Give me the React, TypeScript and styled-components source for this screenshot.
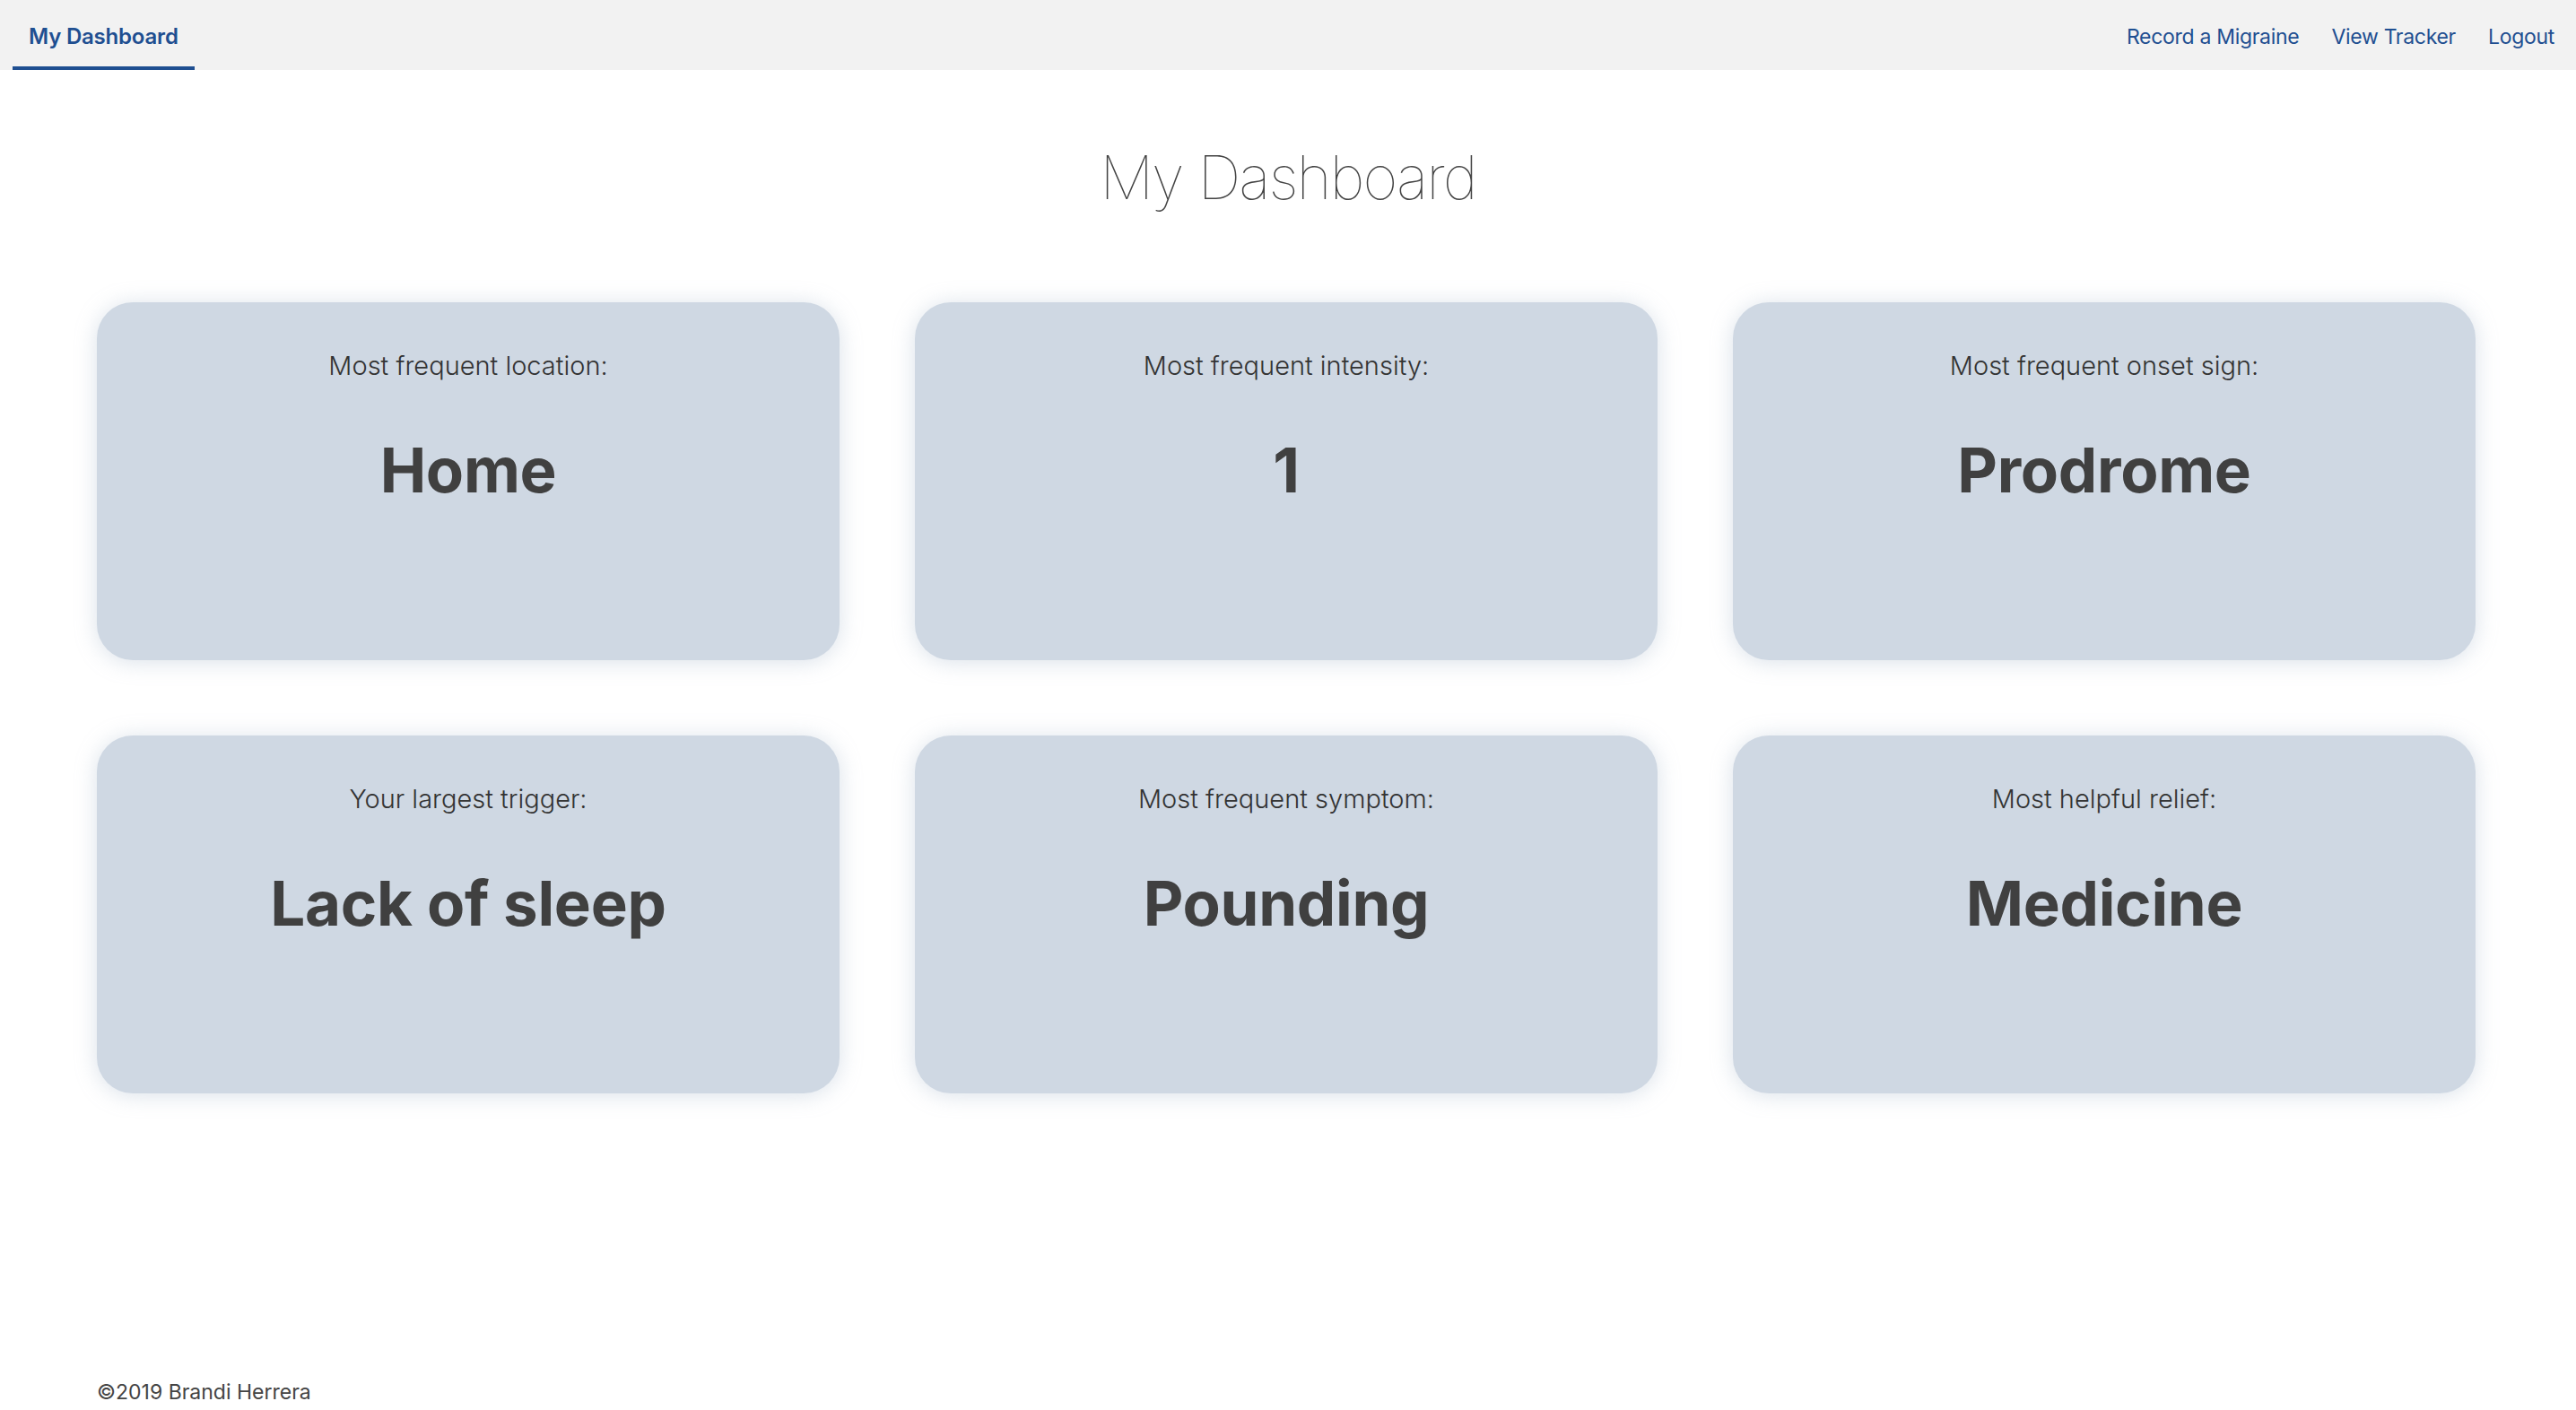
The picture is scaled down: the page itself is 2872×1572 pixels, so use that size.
import React from 'react';
import styled, { createGlobalStyle } from 'styled-components';

const GlobalStyle = createGlobalStyle`
  html, body {
    margin: 0;
    padding: 0;
    background: #ffffff;
    font-family: Inter, "Noto Sans", "Liberation Sans", sans-serif;
  }
`;

const Page = styled.div`
  min-height: 100vh;
  display: flex;
  flex-direction: column;
`;

const NavBar = styled.nav`
  height: 78px;
  background-color: #f2f2f2;
  display: flex;
  justify-content: space-between;
  align-items: stretch;
  padding: 0 24px 0 14px;
  box-sizing: border-box;
`;

const ActiveTab = styled.a`
  display: flex;
  align-items: center;
  padding: 6px 18px 0;
  border-bottom: 4px solid #1f4f91;
  color: #1f4f91;
  font-size: 24px;
  letter-spacing: -0.2px;
  font-weight: 600;
  text-decoration: none;
  box-sizing: border-box;
`;

const NavLinks = styled.div`
  display: flex;
  align-items: center;
  gap: 36px;
  padding-top: 3px;
`;

const NavLink = styled.a`
  color: #1f4f91;
  font-size: 23px;
  letter-spacing: -0.3px;
  font-weight: 400;
  text-decoration: none;
`;

const Title = styled.h1`
  margin: 78px 0 0;
  text-align: center;
  font-size: 67px;
  line-height: 83px;
  letter-spacing: -2px;
  font-weight: 100;
  color: #444444;
`;

const Grid = styled.section`
  width: 2652px;
  margin: 98px 0 0 108px;
  display: grid;
  grid-template-columns: repeat(3, 1fr);
  gap: 84px;
`;

const Card = styled.div`
  height: 399px;
  background-color: #cfd8e3;
  border-radius: 40px;
  box-shadow: 0 2px 24px rgba(150, 168, 192, 0.35);
  padding-top: 53px;
  box-sizing: border-box;
  text-align: center;
`;

const Label = styled.p`
  margin: 0;
  font-size: 29px;
  line-height: 35px;
  font-weight: 300;
  color: #333333;
`;

const Value = styled.p`
  margin: 58px 0 0;
  font-size: 69px;
  line-height: 83px;
  font-weight: 700;
  letter-spacing: -0.3px;
  color: #404040;
`;

const Footer = styled.footer`
  margin-top: auto;
  padding: 0 0 6px 108px;
  font-size: 23px;
  line-height: 28px;
  color: #444444;
`;

const stats = [
  { label: 'Most frequent location:', value: 'Home' },
  { label: 'Most frequent intensity:', value: '1' },
  { label: 'Most frequent onset sign:', value: 'Prodrome' },
  { label: 'Your largest trigger:', value: 'Lack of sleep' },
  { label: 'Most frequent symptom:', value: 'Pounding' },
  { label: 'Most helpful relief:', value: 'Medicine' },
];

const App: React.FC = () => {
  return (
    <Page>
      <GlobalStyle />
      <NavBar>
        <ActiveTab href="#">My Dashboard</ActiveTab>
        <NavLinks>
          <NavLink href="#">Record a Migraine</NavLink>
          <NavLink href="#">View Tracker</NavLink>
          <NavLink href="#">Logout</NavLink>
        </NavLinks>
      </NavBar>
      <Title>My Dashboard</Title>
      <Grid>
        {stats.map((s) => (
          <Card key={s.label}>
            <Label>{s.label}</Label>
            <Value>{s.value}</Value>
          </Card>
        ))}
      </Grid>
      <Footer>©2019 Brandi Herrera</Footer>
    </Page>
  );
};

export default App;
